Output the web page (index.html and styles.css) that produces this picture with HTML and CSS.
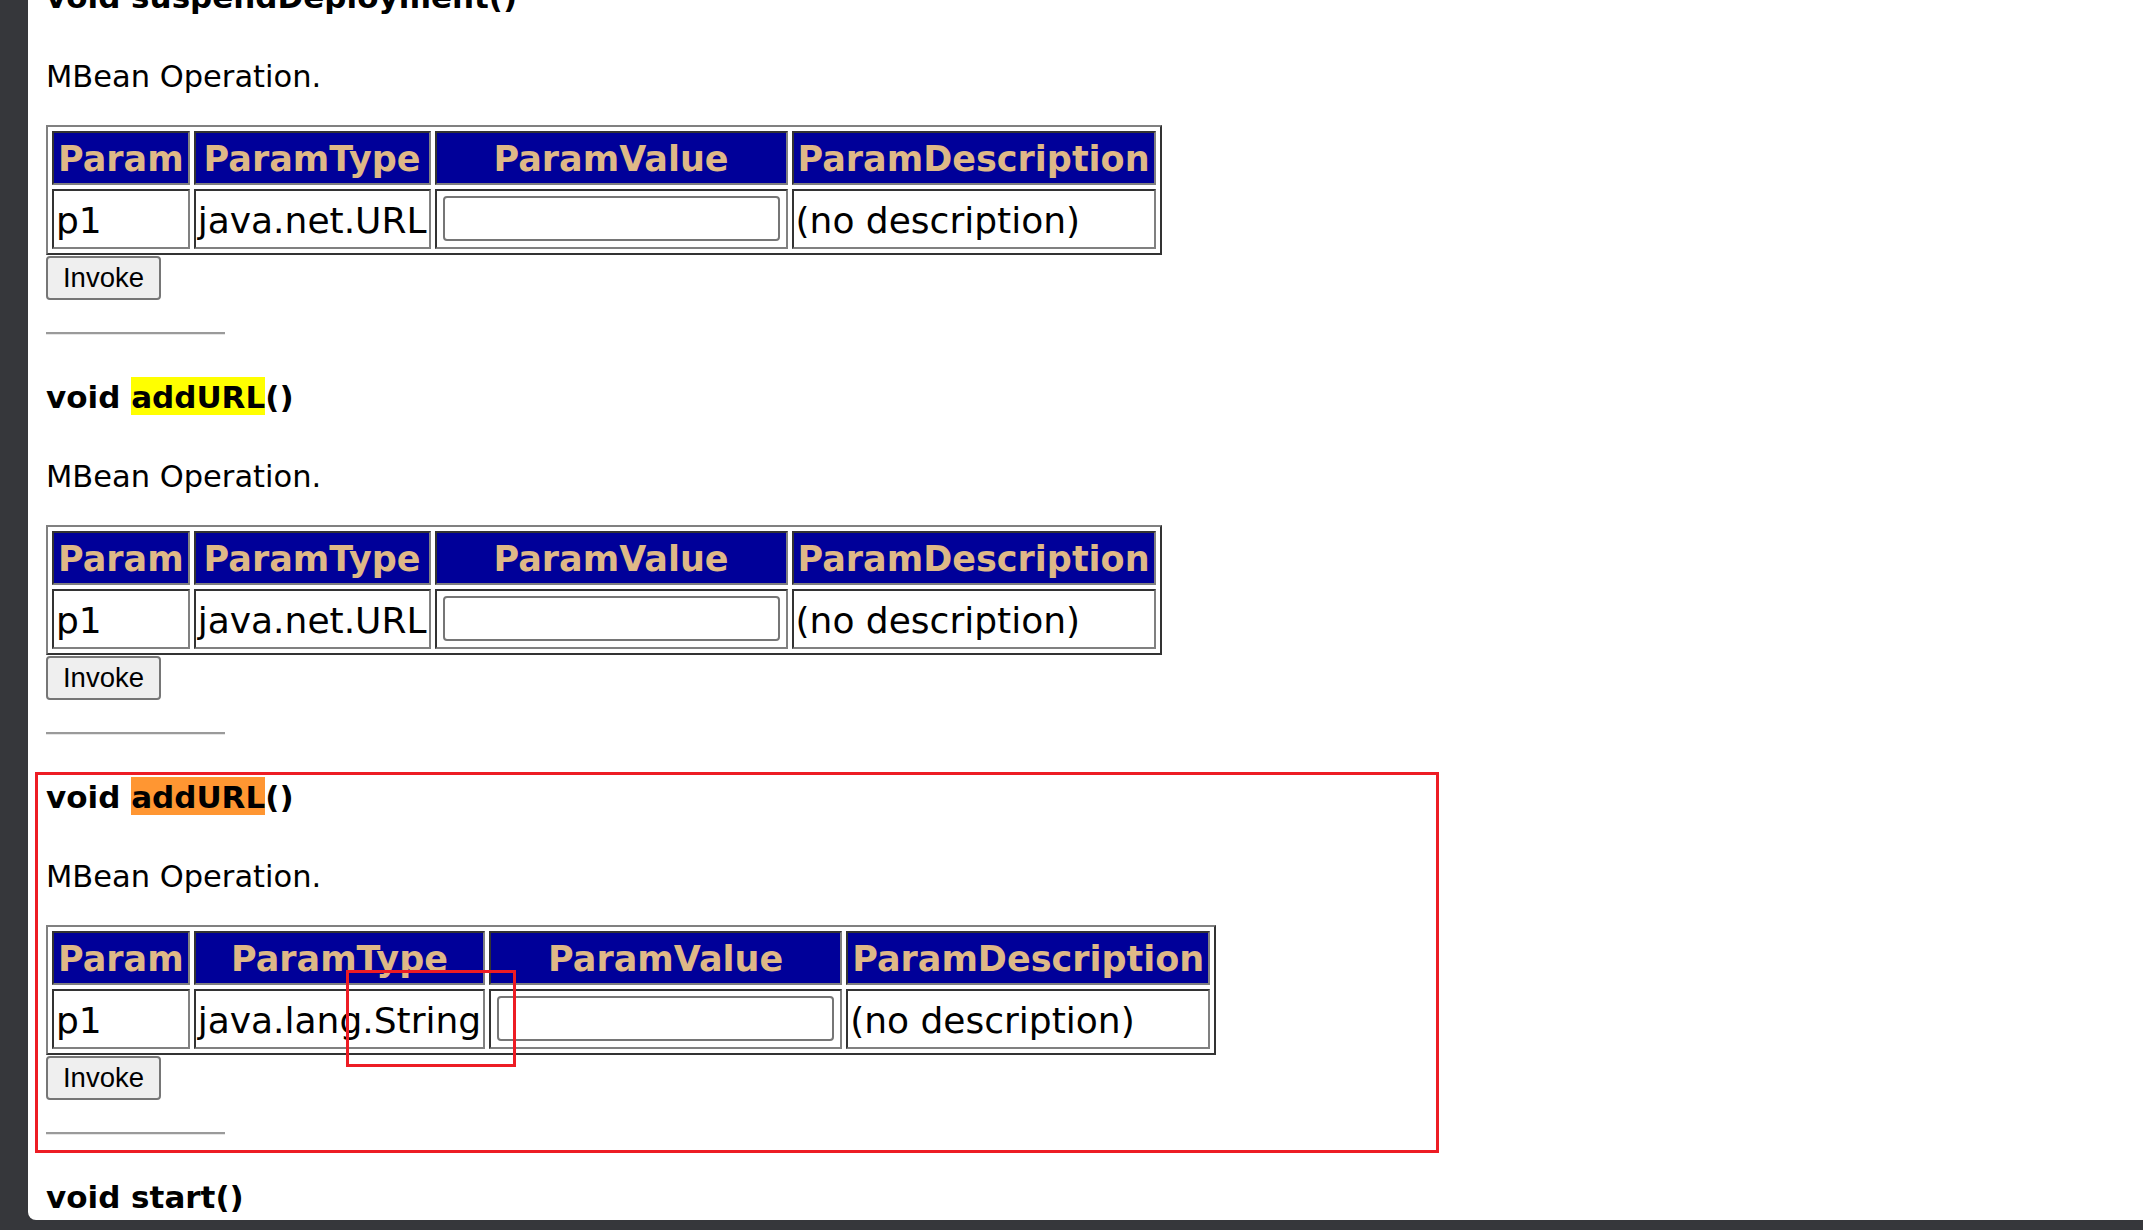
FILE: index.html
```html
<!DOCTYPE html>
<html lang="en">
<head>
<meta charset="utf-8">
<title>JMX MBean Operations</title>
<link rel="stylesheet" href="styles.css">
</head>
<body>
<div class="window">
  <div class="page">
    <div class="content">
      <section class="op">
        <h3 class="op-title">void suspendDeployment()</h3>
        <p class="op-desc">MBean Operation.</p>
        <form class="op-form">
          <table class="params">
            <tr><th>Param</th><th>ParamType</th><th>ParamValue</th><th>ParamDescription</th></tr>
            <tr><td>p1</td><td>java.net.URL</td><td><input type="text"></td><td>(no description)</td></tr>
          </table>
          <button type="button" class="invoke">Invoke</button>
        </form>
        <hr class="sep">
      </section>
      <section class="op">
        <h3 class="op-title">void <span class="hl">addURL</span>()</h3>
        <p class="op-desc">MBean Operation.</p>
        <form class="op-form">
          <table class="params">
            <tr><th>Param</th><th>ParamType</th><th>ParamValue</th><th>ParamDescription</th></tr>
            <tr><td>p1</td><td>java.net.URL</td><td><input type="text"></td><td>(no description)</td></tr>
          </table>
          <button type="button" class="invoke">Invoke</button>
        </form>
        <hr class="sep">
      </section>
      <section class="op">
        <h3 class="op-title">void <span class="hl active">addURL</span>()</h3>
        <p class="op-desc">MBean Operation.</p>
        <form class="op-form">
          <table class="params">
            <tr><th>Param</th><th>ParamType</th><th>ParamValue</th><th>ParamDescription</th></tr>
            <tr><td>p1</td><td>java.lang.String</td><td><input type="text"></td><td>(no description)</td></tr>
          </table>
          <button type="button" class="invoke">Invoke</button>
        </form>
        <hr class="sep">
      </section>
      <section class="op">
        <h3 class="op-title">void start()</h3>
        <p class="op-desc">MBean Operation.</p>
      </section>
    </div>
    <div class="mark mark-big"></div>
    <div class="mark mark-small"></div>
  </div>
</div>
</body>
</html>
```

FILE: styles.css
```css
html, body {
  margin: 0;
  padding: 0;
}

body {
  background: #36373b;
  font-family: "DejaVu Sans", Verdana, sans-serif;
  color: #000;
}

.window {
  display: flex;
  height: 1230px;
  padding: 0 0 10px 28px;
  box-sizing: border-box;
}

.page {
  flex: 1;
  position: relative;
  background: #fff;
  border-bottom-left-radius: 8px;
  overflow: hidden;
  padding-left: 18px;
}

.content {
  margin-top: -22px;
}

.op-title {
  margin: 0 0 43px;
  font-size: 31px;
  line-height: 38px;
  font-weight: bold;
  white-space: nowrap;
}

.hl {
  background: #ffff00;
  padding-top: 2px;
}

.hl.active {
  background: #ff9632;
}

.op-desc {
  margin: 0 0 30px;
  font-size: 30.5px;
  line-height: 36px;
}

.op-form {
  margin: 0;
}

.params {
  border-collapse: separate;
  border-spacing: 4px;
  border: 2px solid;
  border-color: #808080 #333333 #333333 #808080;
}

.params th {
  background: #000099;
  color: #deb887;
  font-size: 35px;
  line-height: 46px;
  padding: 3px 4px 1px;
  border: 2px solid;
  border-color: #333333 #808080 #808080 #333333;
  white-space: nowrap;
}

.params td {
  font-size: 36px;
  line-height: 52px;
  padding: 4px 2px 0;
  border: 2px solid;
  border-color: #333333 #808080 #808080 #333333;
  white-space: nowrap;
}

.params input {
  display: block;
  width: 337px;
  height: 45px;
  margin: 1px 4px 6px;
  box-sizing: border-box;
  border: 2px solid #767676;
  border-radius: 4px;
  background: #fff;
}

.invoke {
  display: block;
  margin-top: 1px;
  width: 115px;
  height: 44px;
  padding: 0;
  font-family: "Liberation Sans", Arial, sans-serif;
  font-size: 27.5px;
  color: #000;
  background: #efefef;
  border: 2px solid #767676;
  border-radius: 4px;
}

.sep {
  width: 179px;
  height: 0;
  margin: 32px 0 43px;
  border: 0;
  border-top: 2px solid #9a9a9a;
  border-bottom: 1px solid #e6e6e6;
}

.mark {
  position: absolute;
  box-sizing: border-box;
  border: 3px solid #ed1c24;
  pointer-events: none;
}

.mark-big {
  left: 7px;
  top: 772px;
  width: 1404px;
  height: 381px;
}

.mark-small {
  left: 318px;
  top: 970px;
  width: 170px;
  height: 97px;
}
```
